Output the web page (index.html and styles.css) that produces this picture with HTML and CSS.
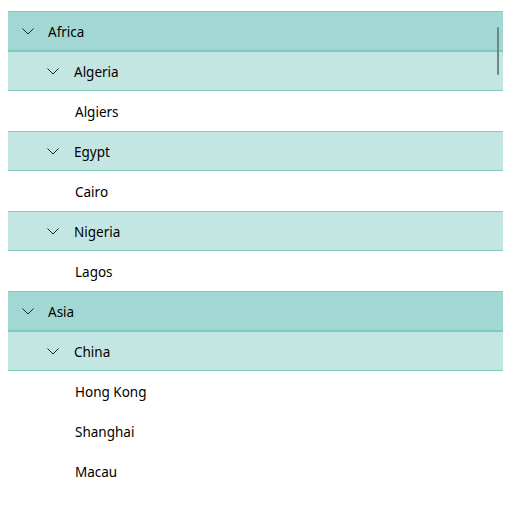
FILE: index.html
```html
<!DOCTYPE html>
<html>
<head>
<meta charset="utf-8">
<link rel="stylesheet" href="styles.css">
</head>
<body>
<div class="tree">
  <div class="row group l1"><svg class="chev" viewBox="0 0 12 7"><path d="M0.5 0.5 L6 6 L11.5 0.5"/></svg><span>Africa</span></div>
  <div class="row group l2"><svg class="chev" viewBox="0 0 12 7"><path d="M0.5 0.5 L6 6 L11.5 0.5"/></svg><span>Algeria</span></div>
  <div class="row leaf"><span>Algiers</span></div>
  <div class="row group l2"><svg class="chev" viewBox="0 0 12 7"><path d="M0.5 0.5 L6 6 L11.5 0.5"/></svg><span>Egypt</span></div>
  <div class="row leaf"><span>Cairo</span></div>
  <div class="row group l2"><svg class="chev" viewBox="0 0 12 7"><path d="M0.5 0.5 L6 6 L11.5 0.5"/></svg><span>Nigeria</span></div>
  <div class="row leaf"><span>Lagos</span></div>
  <div class="row group l1"><svg class="chev" viewBox="0 0 12 7"><path d="M0.5 0.5 L6 6 L11.5 0.5"/></svg><span>Asia</span></div>
  <div class="row group l2"><svg class="chev" viewBox="0 0 12 7"><path d="M0.5 0.5 L6 6 L11.5 0.5"/></svg><span>China</span></div>
  <div class="row leaf"><span>Hong Kong</span></div>
  <div class="row leaf"><span>Shanghai</span></div>
  <div class="row leaf"><span>Macau</span></div>
  <div class="thumb"></div>
</div>
</body>
</html>
```
FILE: styles.css
```css
html, body {
  margin: 0;
  padding: 0;
  background: #ffffff;
}
body {
  padding: 11px 14px 0 8px;
  font-family: "Noto Sans", "Open Sans", sans-serif;
  font-size: 13.5px;
  color: #000000;
}
.tree {
  position: relative;
  display: flex;
  flex-direction: column;
  width: 495px;
}
.row {
  height: 40px;
  box-sizing: border-box;
  display: flex;
  align-items: center;
}
.group {
  border-top: 1px solid #7fcac1;
  border-bottom: 1px solid #7fcac1;
}
.l1 {
  background: #a2d8d3;
  padding-left: 14px;
}
.l2 {
  background: #c4e6e3;
  padding-left: 39px;
}
.l2 .chev {
  margin-right: 15px;
}
.leaf {
  padding-left: 67px;
}
.chev {
  width: 12px;
  height: 7px;
  margin-right: 14px;
  margin-top: 1px;
  fill: none;
  stroke: #222222;
  stroke-width: 1;
}
.row span {
  line-height: 1;
  margin-top: 3px;
}
.thumb {
  position: absolute;
  left: 489px;
  top: 16px;
  width: 2px;
  height: 48px;
  background: #6b8a86;
  border-radius: 1px;
}
```
